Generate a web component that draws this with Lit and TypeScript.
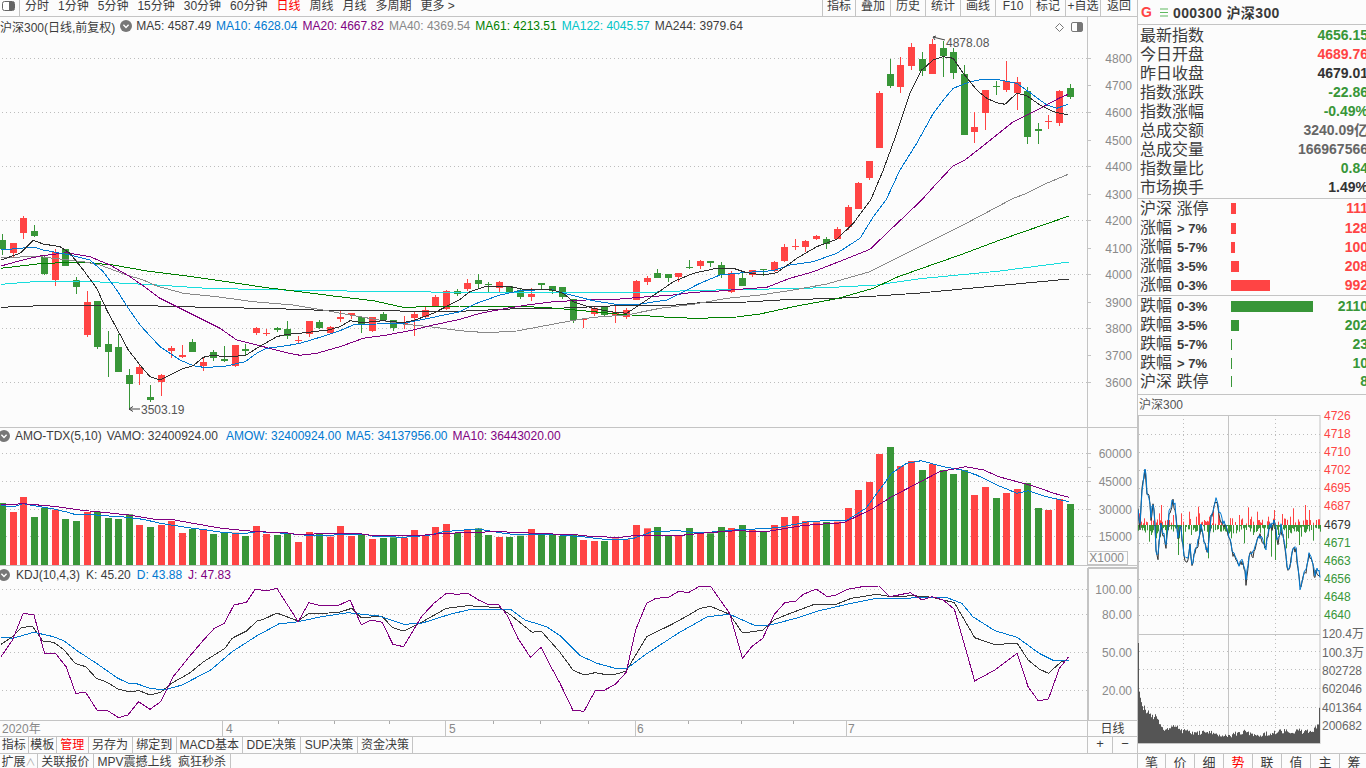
import { LitElement, html, css, svg } from "lit";
import { customElement } from "lit/decorators.js";

const RED = "#ff4444";
const GREEN = "#389638";
const BLUE = "#0078d0";
const PURPLE = "#800080";
const DARK = "#333333";
const GRAY = "#888888";
const AQUA = "#19dcdc";
const LIME = "#007f00";

// top wick, body top, body bottom, bottom wick, colour (0 green, 1 red)
const K: number[][] = [
[234,240,249,255,0],[243,243,253,257,1],[216,218,233,239,1],[225,231,236,237,0],[256,257,274,275,0],[249,252,280,286,1],[249,249,266,266,0],[277,280,287,294,0],[291,302,335,337,1],[301,301,347,349,0],
[331,344,352,377,0],[334,347,372,372,0],[369,375,384,410,0],[365,367,374,385,1],[385,397,400,402,0],[374,375,382,396,1],[346,348,351,358,1],[345,355,357,358,1],[339,342,352,352,0],[357,362,366,371,1],
[350,352,358,361,0],[346,359,361,362,0],[345,345,366,367,1],[344,349,351,355,0],[327,328,333,335,1],[329,333,334,336,1],[327,328,330,332,0],[321,329,336,339,0],[336,340,341,344,1],[321,321,334,337,1],
[320,322,328,329,0],[326,327,333,334,1],[311,317,319,322,1],[313,313,315,319,1],[316,317,325,333,0],[317,317,331,332,1],[312,314,320,321,0],[320,320,328,331,0],[316,322,324,329,1],[312,314,318,336,1],
[306,310,317,318,1],[295,297,306,306,1],[290,291,309,310,1],[289,291,294,296,0],[279,283,289,291,1],[274,280,284,289,0],[282,284,285,292,0],[281,282,288,292,1],[286,286,292,292,0],[288,290,297,299,0],
[288,294,297,301,1],[283,283,285,290,0],[286,286,291,294,0],[287,287,297,299,0],[299,299,320,323,0],[318,319,320,328,1],[307,308,314,316,1],[307,307,315,317,0],[306,312,315,323,1],[308,310,317,319,1],
[280,281,300,300,1],[276,278,282,285,1],[269,273,278,278,0],[274,274,278,282,0],[273,273,277,282,1],[260,267,268,269,0],[260,261,266,269,1],[261,261,263,267,0],[262,265,275,278,0],[271,273,292,293,1],
[273,278,286,286,0],[270,270,275,277,1],[269,269,270,276,0],[261,262,271,272,1],[244,247,261,262,1],[239,246,247,250,1],[240,241,247,252,1],[235,236,239,240,1],[237,239,244,249,0],[227,229,239,239,1],
[205,207,227,230,1],[182,183,209,209,1],[161,161,178,180,1],[91,93,148,148,1],[59,74,86,88,0],[57,65,87,93,1],[43,47,66,70,1],[52,59,71,76,0],[39,44,74,74,1],[41,48,56,77,0],
[48,52,73,79,0],[65,74,135,135,0],[112,127,132,143,1],[90,90,113,130,1],[81,86,87,95,0],[61,81,90,92,1],[77,82,93,110,1],[87,91,137,144,0],[123,129,131,144,0],[115,121,122,129,1],
[90,91,123,126,1],[84,88,97,99,0],
];

const AMO_Y = [234,261,216,276,248,254,282,288,261,260,279,282,268,300,306,300,288,324,312,315,327,322,323,333,303,327,330,325,351,321,324,335,303,333,328,342,339,337,339,315,330,306,297,324,312,310,330,336,336,332,312,327,327,333,328,345,348,348,340,343,300,310,306,333,332,309,325,325,306,309,300,315,320,300,276,273,288,292,291,290,249,195,171,87,66,123,108,135,117,135,147,135,210,186,219,204,192,174,249,255,222,237];

const cx = (i: number) => Math.round(2 + 10.57 * i);
const P = (a: number[], x0: number, sx: number, y0: number) => {
  const out: string[] = [];
  for (let i = 0; i < a.length; i += 2) out.push(`${(x0 + a[i] / sx).toFixed(1)},${(y0 + a[i + 1] / 3).toFixed(1)}`);
  return out;
};
const Z2 = (a: number[]) => P(a, 0, 3, 200);
const Z3 = (a: number[]) => P(a, 460, 3, 200);
const Z4 = (a: number[]) => P(a, 800, 3, 0);

const MAIN_LINES: [string, string[]][] = [
  [DARK, [...Z2([3,322,150,316,440,317,660,323,800,325,1000,332,1200,333,1380,334]), ...Z3([150,327,290,325,450,318,640,316,720,308,860,306,960,300,1130,295,1250,288,1380,279]), "1069,279"]],
  [AQUA, [...Z2([3,253,90,246,240,243,340,248,470,255,620,265,850,270,970,272,1200,275,1380,277]), ...Z3([570,277,680,272,860,268,1000,266,1120,262,1250,255,1380,236]), "1000,271", "1069,262"]],
  [LIME, [...Z2([3,205,130,190,250,187,340,195,440,213,560,228,680,245,800,263,900,275,1000,288,1120,302,1210,322,1290,320,1380,318]), ...Z3([170,318,290,325,400,335,480,343,570,348,640,353,720,355,830,351,900,342,1010,318,1130,296,1240,265,1310,232,1380,207]), "960,255", "1000,240", "1069,216"]],
  [GRAY, [...Z2([3,172,120,170,250,185,300,195,380,225,430,240,470,258,550,280,650,290,760,305,880,315,970,330,1050,345,1150,362,1210,372,1290,380,1380,392]), ...Z3([80,398,170,393,250,378,330,363,400,352,500,345,600,325,700,313,800,295,900,285,1000,270,1100,252,1230,215,1300,180,1380,140]), "965,224", ...Z4([640,595,680,580,740,550,805,523])]],
  [PURPLE, [...Z2([3,198,60,182,120,168,200,158,270,170,330,195,390,230,440,265,480,295,540,325,600,355,660,385,710,420,790,440,860,458,900,466,950,460,1020,440,1090,415,1160,405,1240,390,1300,375,1380,358]), ...Z3([60,340,140,325,200,315,280,305,380,300,470,298,540,292,640,285,700,277,765,274,860,266,920,262,990,235,1060,215,1150,180,1230,148,1280,100]), ...Z4([365,600,410,550,460,497,495,480,540,445,640,365,670,350,730,320,780,293,805,283])]],
  [BLUE, [...Z2([3,150,60,145,100,141,130,150,210,165,270,180,310,215,350,270,385,325,420,375,480,440,540,480,580,497,610,502,670,500,735,485,770,460,800,445,860,437,900,430,950,415,1020,392,1060,375,1130,372,1210,370,1300,352,1380,335]), ...Z3([50,310,120,285,180,272,270,268,320,282,400,302,480,315,540,312,620,300,670,275,720,250,780,225,860,217,940,212,990,195,1060,185,1130,160,1200,115,1240,50]), ...Z4([258,600,300,510,350,430,400,340,430,300,460,265,510,245,550,238,600,240,650,250,700,285,740,315,770,325,805,313])]],
  ["#2f2f2f", [...Z2([3,180,60,160,100,121,130,132,180,140,210,160,250,210,290,265,320,330,350,385,385,450,420,495,450,530,480,540,510,525,545,507,580,497,610,472,640,465,670,470,735,467,770,445,830,410,860,403,900,400,940,395,985,390,1020,380,1050,362,1085,368,1150,362,1210,368,1245,360,1300,340,1380,298]), ...Z3([30,275,80,258,150,260,200,270,270,268,310,280,340,305,400,325,450,335,500,340,530,320,590,280,640,245,700,220,770,205,820,205,860,218,910,225,950,218,990,190,1010,175,1070,140,1130,118,1180,70]), ...Z4([212,600,250,510,290,400,330,280,365,210,400,180,430,170,460,175,490,220,530,270,560,295,590,308,615,313,650,280,680,287,720,315,760,335,805,345])]],
];

const Z8 = (a: number[]) => P(a, 0, 2.8, 425);
const Z9 = (a: number[]) => P(a, 560, 2.713, 425);
const Z10 = (a: number[]) => P(a, 0, 2.8, 565);
const Z11 = (a: number[]) => P(a, 560, 2.713, 565);

const AMO_LINES: [string, string[]][] = [
  [BLUE, [...Z8([3,241,35,246,65,236,100,243,150,252,190,262,215,270,250,268,290,272,340,275,400,283,450,295,520,307,580,315,620,322,680,326,720,320,800,325,850,330,935,330,1020,327,1040,333,1130,337,1200,331,1240,320,1300,315,1340,312,1400,323,1450,330,1530,328]), ...Z9([0,330,60,335,120,343,170,344,200,340,250,320,320,317,370,323,430,320,480,314,530,312,590,308,680,289,730,287,780,285,830,250,860,205,900,145,940,115,980,107,1040,125,1090,135,1130,150,1190,182,1240,205,1270,197,1320,215,1380,230])]],
  [PURPLE, [...Z8([3,240,65,236,150,244,230,256,300,263,360,270,440,284,490,285,540,295,620,310,720,320,800,323,830,328,1000,325,1040,331,1170,332,1230,326,1320,322,1400,320,1500,325]), ...Z9([0,328,50,330,90,335,165,337,200,332,330,331,400,323,480,317,560,320,650,303,700,298,770,293,850,250,900,215,970,175,1030,140,1100,125,1150,135,1190,155,1240,170,1290,185,1340,205,1380,217])]],
];

const KDJ_LINES: [string, string[]][] = [
  ["#3a3a3a", [...Z10([3,238,35,215,60,188,90,183,120,228,150,232,180,255,210,295,240,305,270,340,300,352,330,372,360,380,390,377,420,390,450,382,480,355,530,325,570,290,630,250,650,220,690,198,720,168,740,162,775,144,835,168,865,145,920,144,950,142,985,130,1010,157,1070,155,1100,188,1130,198,1180,172,1250,130,1310,122,1400,128,1430,150,1490,202,1515,198]), ...Z11([0,262,35,315,65,330,95,323,120,328,150,328,180,318,235,215,300,180,350,150,380,130,408,124,460,148,495,204,550,196,580,165,620,147,690,118,750,118,790,100,860,88,900,95,960,92,1010,97,1070,113,1125,218,1180,239,1240,234,1270,285,1300,312,1325,325,1360,290,1380,285])]],
  [BLUE, [...Z10([3,216,35,220,95,202,150,215,180,228,220,260,270,295,330,340,360,355,385,357,420,370,460,375,510,360,590,315,650,260,720,212,780,177,835,170,900,155,975,143,1060,153,1130,178,1180,175,1260,148,1310,135,1430,133,1470,165,1530,185]), ...Z11([0,212,55,272,100,295,150,310,180,312,230,270,320,205,400,155,460,148,530,182,560,183,640,160,700,138,790,115,860,100,1050,98,1090,115,1120,155,1180,197,1240,217,1300,265,1340,287,1380,287])]],
  [PURPLE, [...Z10([3,275,35,225,65,145,95,150,125,265,155,265,185,305,212,385,240,382,272,436,300,436,332,458,358,450,388,410,420,433,450,410,485,335,530,275,570,225,600,190,628,175,655,120,690,112,715,72,745,78,775,70,835,170,865,113,890,120,950,120,980,105,1012,180,1040,165,1070,172,1100,238,1130,245,1180,155,1215,115,1250,85,1280,88,1310,85,1340,105,1365,118,1395,118,1420,150,1450,220,1485,277,1515,247,1545,310]), ...Z11([0,355,35,436,65,439,95,378,120,376,150,358,180,322,205,195,235,115,260,100,295,97,320,80,350,82,380,63,408,63,460,145,495,280,520,245,550,220,580,150,610,113,640,108,660,88,695,72,725,95,750,90,780,73,820,65,865,63,895,95,950,83,982,105,1010,95,1040,105,1070,133,1125,348,1180,315,1240,265,1270,365,1298,408,1325,402,1355,310,1380,275])]],
];

// minute chart helpers, coordinates from a 3x crop at (1136,410)
let seed = 12345;
const rnd = () => ((seed = (seed * 16807) % 2147483647) / 2147483647);
const interp = (a: number[], X: number) => {
  for (let i = 0; i + 2 < a.length; i += 2) {
    if (X <= a[i + 2]) return a[i + 1] + ((a[i + 3] - a[i + 1]) * (X - a[i])) / Math.max(1, a[i + 2] - a[i]);
  }
  return a[a.length - 1];
};
const PRICE = [6,300,12,345,18,240,28,165,32,240,40,260,45,320,50,280,55,300,60,420,65,450,70,380,75,340,85,380,90,410,100,300,110,270,118,290,125,380,135,350,145,440,155,455,162,400,168,470,175,430,185,400,195,350,205,395,215,430,225,320,240,265,250,310,262,340,272,350,285,400,290,430,300,440,305,470,315,450,325,470,330,515,340,425,350,430,360,410,368,370,378,385,390,410,400,340,410,350,415,325,425,395,435,350,445,390,455,480,465,450,472,410,480,420,490,500,493,545,500,505,510,480,520,425,530,460,535,490,545,480,553,498];
const VOL = [6,840,10,845,15,880,20,905,25,885,30,910,40,905,50,925,60,915,70,945,80,958,100,955,120,945,130,965,150,960,170,970,200,968,230,970,260,975,275,975,285,975,320,965,360,975,400,970,450,962,480,965,490,960,500,968,530,960,549,945];
const jag = (off: number, amp: number) => {
  const out: string[] = [];
  for (let X = 6; X <= 553; X += 3) {
    const y = interp(PRICE, X) + off + (rnd() - 0.5) * amp;
    out.push(`${(1136 + X / 3).toFixed(1)},${(410 + y / 3).toFixed(1)}`);
  }
  return out.join(" ");
};
const LINE_DARK = jag(5, 22);
const LINE_BLUE = jag(0, 20);
const UPS = [[8,310],[14,335],[25,325],[30,335],[45,320],[52,332],[68,310],[76,285],[100,330],[112,315],[120,335],[135,310],[142,335],[160,305],[180,320],[185,290],[190,310],[205,330],[212,335],[220,320],[232,290],[245,310],[288,325],[310,315],[314,335],[337,292],[345,320],[350,335],[362,305],[368,330],[395,320],[400,335],[415,300],[425,335],[437,312],[443,330],[462,320],[470,295],[490,335],[508,285],[512,330],[518,300],[530,338],[540,330],[545,328],[550,328]];
const DOWNS = [[8,352],[40,395],[44,375],[60,385],[64,370],[72,380],[78,360],[90,395],[94,365],[125,435],[130,385],[142,430],[146,365],[165,375],[170,355],[190,380],[195,365],[215,445],[220,370],[255,355],[262,362],[275,375],[280,370],[285,385],[292,370],[300,370],[310,365],[325,400],[330,360],[350,375],[355,355],[385,415],[395,370],[405,440],[418,450],[425,375],[436,365],[450,415],[456,385],[465,370],[480,365],[490,405],[495,380],[510,365],[525,360],[530,392],[552,365]];
const IDX = (X: number) => Math.round(1136 + X / 3);
const FILL_UP = Array.from({ length: 182 }, (_, i) => (rnd() < 0.28 ? [1138 + i, 1 + rnd() * 6] : null)).filter(Boolean) as number[][];
const FILL_DN = Array.from({ length: 182 }, (_, i) => (rnd() < 0.7 ? [1138 + i, 1 + rnd() * 7] : null)).filter(Boolean) as number[][];
const VOL_BARS = Array.from({ length: 181 }, (_, i) => {
  const Y = interp(VOL, 6 + i * 3) + (rnd() - 0.5) * 14;
  return [1138 + i, 410 + Y / 3];
});

@customElement("app-root")
export class AppRoot extends LitElement {
  static styles = css`
    :host { display: block; width: 1366px; height: 768px; overflow: hidden; background: #fcfcfc; color: #3c3c3c;
      font: 12px "Liberation Sans", "Noto Sans CJK SC", sans-serif; }
    .app { display: grid; grid-template-columns: 1137px 229px; height: 768px; }
    .left { display: flex; flex-direction: column; height: 768px; }
    .right { border-left: 1px solid #c4c4c4; display: flex; flex-direction: column; height: 768px; overflow: hidden; }
    .toolbar { height: 16px; border-bottom: 1px solid #c4c4c4; display: flex; flex: none; line-height: 12px; overflow: hidden; }
    .tool-icon { width: 20px; height: 16px; border-right: 1px solid #c4c4c4; padding: 1px 0 0 2px; box-sizing: border-box; flex: none; }
    .periods { display: flex; gap: 9px; padding-left: 5px; white-space: nowrap; }
    .periods .on { color: #f00; }
    .cells { margin-left: auto; display: flex; }
    .cell { width: 35px; height: 16px; border-left: 1px solid #c4c4c4; box-sizing: border-box; text-align: center; white-space: nowrap; }
    .cell:first-child { width: 33px; }
    .cell:last-child { width: 37px; }
    .pane { position: relative; flex: none; border-bottom: 1px solid #c4c4c4; }
    .pane svg.chart { display: block; }
    .pline { shape-rendering: crispEdges; }
    .legend { position: absolute; left: 0; top: 0; display: flex; gap: 5px; white-space: nowrap; align-items: center; }
    .leg-main { height: 18px; }
    .leg-amo { height: 16px; }
    .leg-kdj { height: 18px; gap: 6px; }
    .chev { margin-left: -2px; margin-right: -1px; flex: none; display: block; }
    .chev-main { margin-left: 0; margin-right: -1px; }
    .lead { margin-left: 1px; }
    .blue { color: #0078d0; }
    .pur { color: #800080; }
    .gry { color: #888; }
    .grn { color: #007f00; }
    .aqua { color: #00c4c8; }
    .wide { margin-left: 3px; }
    .pane-tools { position: absolute; right: 54px; top: 5px; display: flex; gap: 7px; align-items: center; }
    text { font-family: "Liberation Sans", "Noto Sans CJK SC", sans-serif; font-size: 12px; }
    .ax { fill: #8a8a8a; text-anchor: end; }
    .mk { fill: #555; }
    .xrow { height: 15px; border-bottom: 1px solid #c4c4c4; position: relative; flex: none; display: grid; grid-template-columns: 1087px 50px; }
    .xrow svg { display: block; }
    .xunit { border-left: 1px solid #c4c4c4; text-align: center; line-height: 16px; }
    .tabs { height: 16px; border-bottom: 1px solid #c4c4c4; display: grid; grid-template-columns: 1087px 25px 25px; flex: none; }
    .tab-list { display: flex; }
    .tab { border-right: 1px solid #c4c4c4; text-align: center; line-height: 16px; box-sizing: border-box; white-space: nowrap; }
    .tab.red { color: #f00; }
    .pm { border-left: 1px solid #c4c4c4; text-align: center; line-height: 14px; font-size: 13px; }
    .ext { height: 14px; display: flex; overflow: hidden; flex: none; }
    .ext .tab { line-height: 17px; }
    .ext .arrow { color: #aaa; font-size: 10px; }
    .head { height: 24px; border-bottom: 1px solid #c4c4c4; display: flex; align-items: center; flex: none; font-weight: bold; font-size: 14px; color: #3a3a3a; white-space: nowrap; }
    .g { color: #ff4444; font-size: 14px; margin-left: 3px; width: 10px; }
    .menu { margin-left: 9px; margin-right: 5px; display: block; }
    .code { letter-spacing: 0.4px; }
    .tbl { padding: 1px 0; border-bottom: 1px solid #c4c4c4; flex: none; }
    .row { height: 19px; display: flex; justify-content: space-between; align-items: center; padding-left: 2px; font-size: 16px; line-height: 19px; white-space: nowrap; }
    .val { font-size: 14px; font-weight: bold; margin-right: -2px; }
    .v-g { color: #389638; }
    .v-r { color: #ff4444; }
    .v-d { color: #333; }
    .v-m { color: #666; }
    .stats { border-bottom: 1px solid #c4c4c4; flex: none; padding-bottom: 1px; }
    .stats.s2 { padding-bottom: 3px; }
    .srow { height: 19px; display: grid; grid-template-columns: 91px 1fr auto; align-items: center; padding-left: 2px; font-size: 16px; line-height: 19px; white-space: nowrap; }
    .srow b { font-size: 13px; color: #3a3a3a; margin-left: 5px; }
    .bar { height: 11px; display: block; }
    .title { height: 20px; line-height: 20px; padding-left: 1px; flex: none; color: #555; }
    .mini { display: block; flex: none; overflow: visible; }
    .btabs { height: 14px; display: grid; grid-template-columns: 28px repeat(7, 29px); overflow: hidden; flex: none; border-top: 1px solid #c4c4c4; font-size: 13px; }
    .btabs div { border-right: 1px solid #c4c4c4; text-align: center; line-height: 18px; box-sizing: border-box; }
    .btabs .on { color: #f00; }
  `;

  private chevron(cls: string) {
    return html`<svg class="chev ${cls}" width="12" height="12" viewBox="0 0 12 12"><circle cx="6" cy="6" r="6" fill="#777"/><path d="M3.4 4.8 6 7.4l2.6-2.6" fill="none" stroke="#fff" stroke-width="1.4"/></svg>`;
  }

  private dotted(ys: number[]) {
    return ys.map((y) => svg`<line x1="2" x2="1087" y1=${y + 0.5} y2=${y + 0.5} stroke="#bdbdbd" stroke-dasharray="1 3"/>`);
  }

  private lines(ls: [string, string[]][]) {
    return ls.map(([c, p]) => svg`<polyline class="pline" points=${p.join(" ")} fill="none" stroke=${c} stroke-width="1"/>`);
  }

  private axisFrame(ticks: number[], h: number, y0: number) {
    return svg`<line x1="1087.5" x2="1087.5" y1=${y0} y2=${y0 + h} stroke="#c4c4c4"/>
      ${ticks.map((y) => svg`<line x1="1087" x2="1091" y1=${y + 0.5} y2=${y + 0.5} stroke="#c4c4c4"/>`)}`;
  }

  render() {
    const mainGrid = [58, 112, 166, 220, 274, 328, 382];
    const mainLabels: [string, number][] = [["4800",58],["4700",85],["4600",112],["4500",140],["4400",166],["4300",194],["4200",220],["4100",248],["4000",274],["3900",302],["3800",328],["3700",355],["3600",382]];
    const amoGrid = [453, 481, 509, 536];
    const kdjGrid = [589, 614, 652, 690];
    const periods = ["分时","1分钟","5分钟","15分钟","30分钟","60分钟","日线","周线","月线","多周期","更多 >"];
    const cells = ["指标","叠加","历史","统计","画线","F10","标记","+自选","返回"];
    const tabs: [string, number, boolean][] = [["指标",28.5,false],["模板",28.5,false],["管理",31.5,true],["另存为",44,false],["绑定到",44.5,false],["MACD基本",65.5,false],["DDE决策",58.5,false],["SUP决策",57,false],["资金决策",55,false]];
    const info: [string, string, string][] = [["最新指数","4656.15","v-g"],["今日开盘","4689.76","v-r"],["昨日收盘","4679.01","v-d"],["指数涨跌","-22.86","v-g"],["指数涨幅","-0.49%","v-g"],["总成交额","3240.09亿","v-m"],["总成交量","166967566","v-m"],["指数量比","0.84","v-g"],["市场换手","1.49%","v-d"]];
    const ups: [string, string, number, string][] = [["沪深 涨停","",5,"111"],["涨幅","> 7%",5,"128"],["涨幅","5-7%",4,"100"],["涨幅","3-5%",8,"208"],["涨幅","0-3%",39,"992"]];
    const downs: [string, string, number, string][] = [["跌幅","0-3%",82,"2110"],["跌幅","3-5%",8,"202"],["跌幅","5-7%",1,"23"],["跌幅","> 7%",1,"10"],["沪深 跌停","",1,"8"]];
    const priceL: [string, number, string][] = [["4726",416,RED],["4718",434,RED],["4710",452,RED],["4702",470,RED],["4695",488,RED],["4687",506,RED],["4679",525,DARK],["4671",543,GREEN],["4663",561,GREEN],["4656",579,GREEN],["4648",597,GREEN],["4640",615,GREEN]];
    const volL: [string, number][] = [["120.4万",634],["100.3万",653],["802728",671],["602046",689],["401364",708],["200682",726]];
    const dates: [string, number][] = [["2020年",222],["4",445],["5",635],["6",846]];

    const stat = (rows: typeof ups, color: string, cls: string) => rows.map(([a, b, w, v]) => html`<div class="srow"><span>${a}${b ? html`<b>${b}</b>` : ""}</span><span><span class="bar" style="width:${w}px;background:${color}"></span></span><span class="val ${cls}">${v}</span></div>`);

    return html`<div class="app">
      <div class="left">
        <div class="toolbar">
          <div class="tool-icon"><svg width="13" height="11" viewBox="0 0 13 11" style="display:block"><rect x=".5" y=".5" width="12" height="9" rx="2" fill="#fff" stroke="#666"/><rect x="7" y="1" width="5" height="8" fill="#666"/></svg></div>
          <div class="periods">${periods.map((p) => html`<span class=${p === "日线" ? "on" : ""}>${p}</span>`)}</div>
          <div class="cells">${cells.map((c) => html`<div class="cell">${c}</div>`)}</div>
        </div>

        <div class="pane">
          <svg class="chart" width="1137" height="410" viewBox="0 17 1137 410">
            ${this.dotted(mainGrid)}
            ${this.axisFrame(mainLabels.map((l) => l[1]), 410, 17)}
            ${K.map((k, i) => {
              const c = k[4] ? RED : GREEN, x = cx(i);
              return svg`<rect x=${x} y=${k[0]} width="1" height=${k[3] - k[0]} fill=${c}/><rect x=${x - 3} y=${k[1]} width="7" height=${Math.max(1, k[2] - k[1])} fill=${c}/>`;
            })}
            ${this.lines(MAIN_LINES)}
            <path d="M129 409h11M129 409l4-2.500M129 409l4 2.500" fill="none" stroke="#444"/>
            <text class="mk" x="141" y="413.500">3503.19</text>
            <path d="M933 37l12 3M933 37l3-1M933 37l2 3" fill="none" stroke="#444"/>
            <text class="mk" x="946" y="47">4878.08</text>
            ${mainLabels.map(([t, y]) => svg`<text class="ax" x="1132" y=${y + 5}>${t}</text>`)}
          </svg>
          <div class="legend leg-main"><span>沪深300(日线,前复权)</span>${this.chevron("chev-main")}
            <span>MA5: 4587.49</span><span class="blue">MA10: 4628.04</span><span class="pur">MA20: 4667.82</span><span class="gry">MA40: 4369.54</span><span class="grn">MA61: 4213.51</span><span class="aqua">MA122: 4045.57</span><span>MA244: 3979.64</span></div>
          <div class="pane-tools">
            <svg width="9" height="9" viewBox="0 0 9 9"><path d="M4.500.5l4 4-4 4-4-4z" fill="#fff" stroke="#777"/></svg>
            <svg width="12" height="10" viewBox="0 0 12 10" style="display:block"><rect x=".5" y=".5" width="11" height="9" rx="1.500" fill="#fff" stroke="#777"/><rect x="6" y="1" width="5" height="8" fill="#777"/></svg>
          </div>
        </div>

        <div class="pane">
          <svg class="chart" width="1137" height="137" viewBox="0 428 1137 137">
            ${this.dotted(amoGrid)}
            ${this.axisFrame([453,467,481,495,509,523,536], 137, 428)}
            ${AMO_Y.map((Y, i) => svg`<rect x=${cx(i) - 3} y=${425 + Y / 3} width="7" height=${140 - Y / 3} fill=${K[i][4] ? RED : GREEN}/>`)}
            ${this.lines(AMO_LINES)}
            ${[["60000",453],["45000",481],["30000",509],["15000",536]].map(([t, y]) => svg`<text class="ax" x="1132" y=${(y as number) + 5}>${t}</text>`)}
            <rect x="1087.500" y="551.500" width="40" height="13" fill="#fcfcfc" stroke="#c4c4c4"/>
            <text class="ax" x="1124" y="562">X1000</text>
          </svg>
          <div class="legend leg-amo">${this.chevron("")}<span class="lead">AMO-TDX(5,10)</span><span>VAMO: 32400924.00</span><span class="blue wide">AMOW: 32400924.00</span><span class="blue">MA5: 34137956.00</span><span class="pur">MA10: 36443020.00</span></div>
        </div>

        <div class="pane">
          <svg class="chart" width="1137" height="154" viewBox="0 566 1137 154">
            ${this.dotted(kdjGrid)}
            <path d="M1088 568h49M1088 568v152" fill="none" stroke="#c4c4c4" stroke-width="2"/>
            ${this.lines(KDJ_LINES)}
            ${[["100.00",589],["80.00",614],["50.00",652],["20.00",690]].map(([t, y]) => svg`<text class="ax" x="1132" y=${(y as number) + 5}>${t}</text>`)}
          </svg>
          <div class="legend leg-kdj">${this.chevron("")}<span class="lead">KDJ(10,4,3)</span><span>K: 45.20</span><span class="blue">D: 43.88</span><span class="pur">J: 47.83</span></div>
        </div>

        <div class="xrow">
          <svg width="1087" height="15" viewBox="0 0 1087 15">
            ${[278,334,389,493,540,588,688,741,793].map((x) => svg`<line x1=${x + 0.5} x2=${x + 0.5} y1="0" y2="3" stroke="#aaa"/>`)}
            ${dates.map(([, x]) => svg`<line x1=${x + 0.5} x2=${x + 0.5} y1="0" y2="15" stroke="#c4c4c4"/>`)}
            <text x="2" y="12" fill="#888">2020年</text>
            <text x="226" y="12" fill="#888">4</text>
            <text x="449" y="12" fill="#888">5</text>
            <text x="637" y="12" fill="#888">6</text>
            <text x="848" y="12" fill="#888">7</text>
          </svg>
          <div class="xunit">日线</div>
        </div>

        <div class="tabs">
          <div class="tab-list">${tabs.map(([t, w, r]) => html`<div class="tab ${r ? "red" : ""}" style="width:${w}px">${t}</div>`)}</div>
          <div class="pm">+</div><div class="pm">−</div>
        </div>

        <div class="ext">
          <div class="tab" style="width:38px">扩展<span class="arrow">∧</span></div>
          <div class="tab" style="width:55.5px">关联报价</div>
          <div class="tab" style="width:137.5px">MPV震撼上线&nbsp;&nbsp;疯狂秒杀</div>
        </div>
      </div>

      <div class="right">
        <div class="head"><span class="g">G</span><svg class="menu" width="8" height="9" viewBox="0 0 8 9"><path d="M0 1h8M0 4.500h8M0 8h8" stroke="#5fb95f"/></svg><span class="code">000300&nbsp;沪深300</span></div>
        <div class="tbl">${info.map(([a, v, c]) => html`<div class="row"><span>${a}</span><span class="val ${c}">${v}</span></div>`)}</div>
        <div class="stats">${stat(ups, RED, "v-r")}</div>
        <div class="stats s2">${stat(downs, GREEN, "v-g")}</div>
        <div class="title">沪深300</div>
        <svg class="mini" width="228" height="338" viewBox="1138 415 228 338">
          <rect x="1138.500" y="415.500" width="181.500" height="328" fill="none" stroke="#c4c4c4"/>
          <line x1="1138" x2="1320" y1="634.500" y2="634.500" stroke="#c4c4c4"/>
          <line x1="1228.500" x2="1228.500" y1="415" y2="743" stroke="#c4c4c4"/>
          ${[1183.5, 1275.5].map((x) => svg`<line x1=${x} x2=${x} y1="415" y2="743" stroke="#bdbdbd" stroke-dasharray="1 3"/>`)}
          ${[434,452,470,488,506,543,561,579,597,615,651,669,688,707,725].map((y) => svg`<line x1="1139" x2="1320" y1=${y + 0.5} y2=${y + 0.5} stroke="#bdbdbd" stroke-dasharray="1 3"/>`)}
          ${FILL_UP.map(([x, h]) => svg`<rect x=${x} y=${525 - h} width="1" height=${h} fill=${RED}/>`)}
          ${UPS.map(([X, Y]) => svg`<rect x=${IDX(X)} y=${410 + Y / 3} width="1" height=${525 - (410 + Y / 3)} fill=${RED}/>`)}
          ${FILL_DN.map(([x, h]) => svg`<rect x=${x} y="525" width="1" height=${h} fill=${GREEN}/>`)}
          ${DOWNS.map(([X, Y]) => svg`<rect x=${IDX(X)} y="525" width="1" height=${410 + Y / 3 - 525} fill=${GREEN}/>`)}
          <polyline points=${LINE_DARK} fill="none" stroke="#333" stroke-width="1"/>
          <polyline points=${LINE_BLUE} fill="none" stroke=${BLUE} stroke-width="1"/>
          <rect x="1138" y="643" width="1" height="100" fill="#555"/>
          ${VOL_BARS.map(([x, y]) => svg`<rect x=${x} y=${y} width="1" height=${743 - y} fill="#555"/>`)}
          <rect x="1319" y="708" width="1" height="35" fill="#555"/>
          ${priceL.map(([t, y, c]) => svg`<text x="1324" y=${y + 4} fill=${c}>${t}</text>`)}
          ${volL.map(([t, y]) => svg`<text x="1322" y=${y + 4} fill="#666">${t}</text>`)}
        </svg>
        <div class="btabs">${["笔","价","细","势","联","值","主","筹"].map((t) => html`<div class=${t === "势" ? "on" : ""}>${t}</div>`)}</div>
      </div>
    </div>`;
  }
}
